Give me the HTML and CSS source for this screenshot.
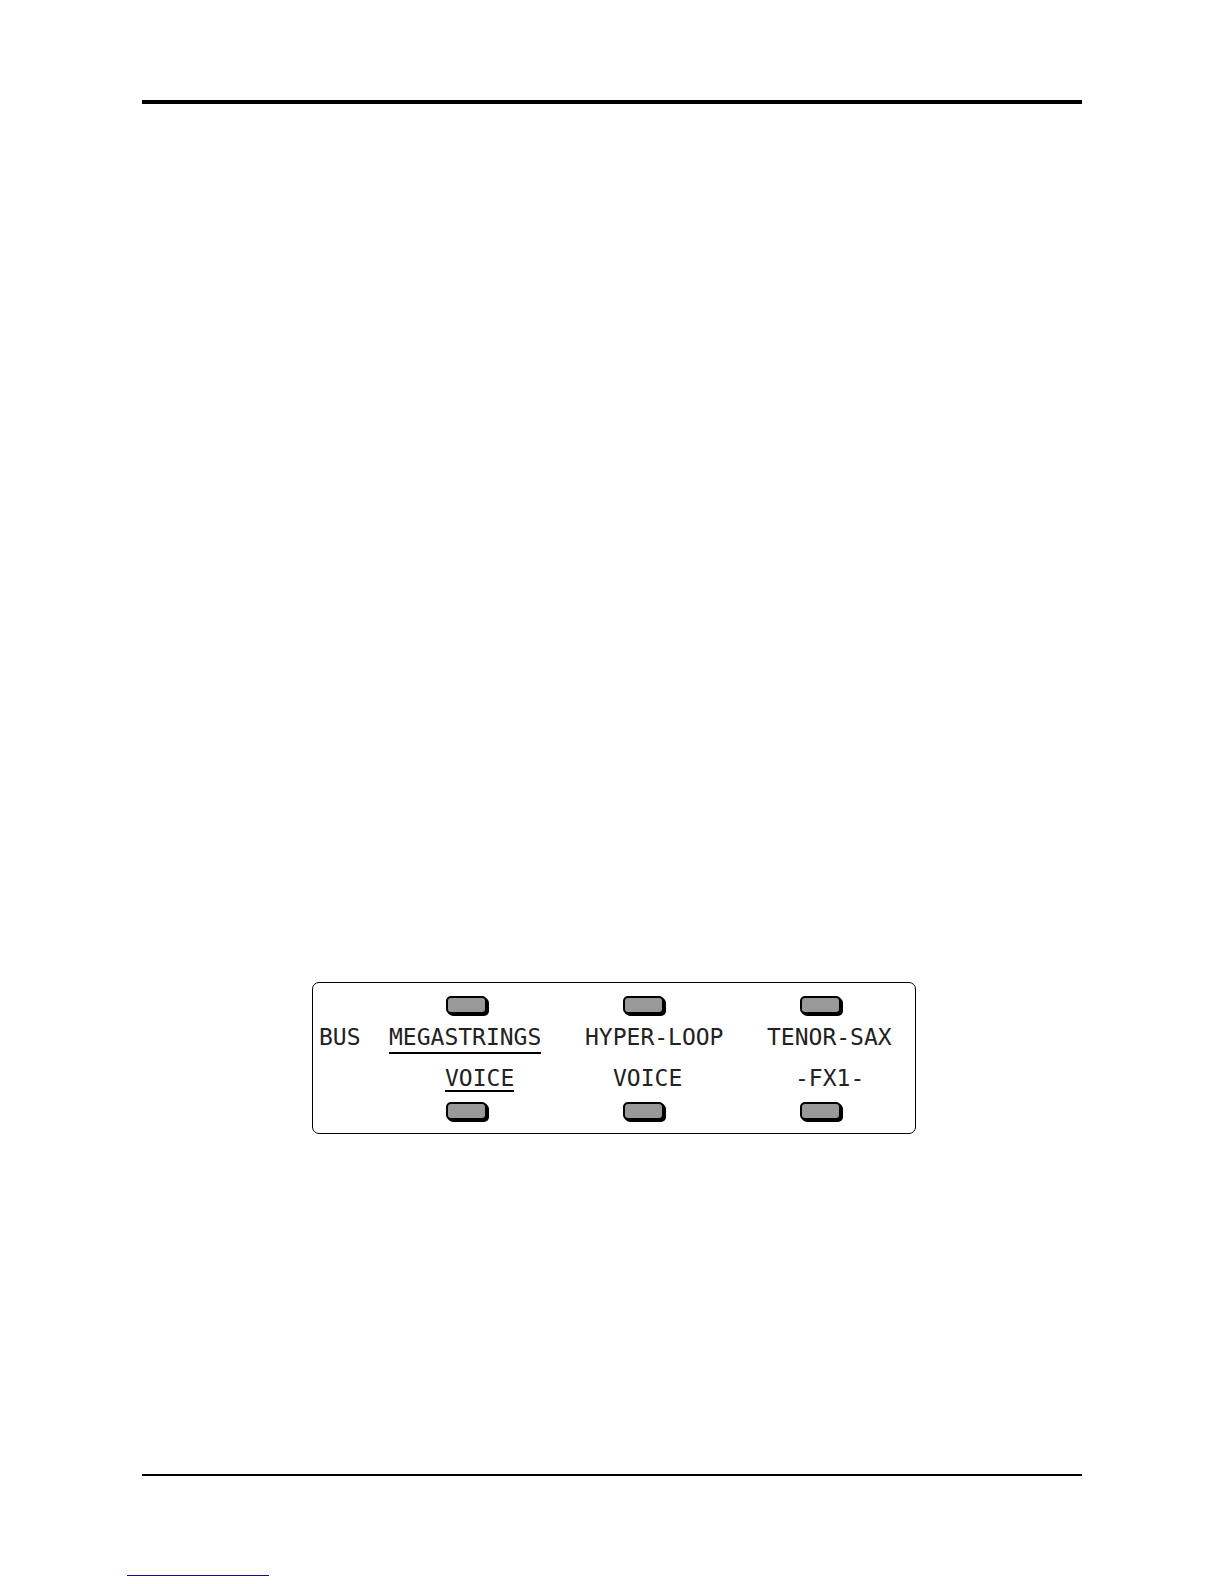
FILE: index.html
```html
<!DOCTYPE html>
<html lang="en">
<head>
<meta charset="utf-8">
<title>Bus effects display</title>
<link rel="stylesheet" href="styles.css">
</head>
<body>
<main class="page">
  <section class="display" aria-label="Bus display">
    <div class="keys">
      <button class="key" type="button" aria-label="Megastrings"></button>
      <button class="key" type="button" aria-label="Hyper-Loop"></button>
      <button class="key" type="button" aria-label="Tenor-Sax"></button>
    </div>
    <div class="line line-names">
      <span class="col-0">BUS</span>
      <span class="col-5 selected">MEGASTRINGS</span>
      <span class="col-19">HYPER-LOOP</span>
      <span class="col-32">TENOR-SAX</span>
    </div>
    <div class="line line-buses">
      <span class="col-9 selected">VOICE</span>
      <span class="col-21">VOICE</span>
      <span class="col-34">-FX1-</span>
    </div>
    <div class="keys">
      <button class="key" type="button" aria-label="Megastrings bus"></button>
      <button class="key" type="button" aria-label="Hyper-Loop bus"></button>
      <button class="key" type="button" aria-label="Tenor-Sax bus"></button>
    </div>
  </section>
</main>
<footer class="footer"><div class="footer-rule"></div></footer>
</body>
</html>
```
FILE: styles.css
```css
* {
  box-sizing: border-box;
}

body {
  margin: 0;
  background: #fff;
  color: #222;
}

.page {
  max-width: 940px;
  margin: 100px auto 0;
  padding: 878px 166px 340px 170px;
  border-top: 4px solid #000;
  border-bottom: 2px solid #000;
}

.display {
  padding: 13px 6px 11px;
  border: 1px solid #000;
  border-radius: 7px;
  font: 23px/22px "DejaVu Sans Mono", monospace;
}

.keys {
  display: flex;
  justify-content: space-between;
  padding: 0 68px 2px 127px;
}

.key {
  width: 41px;
  height: 18px;
  padding: 0;
  border: 2px solid #000;
  border-radius: 5px;
  background: #999;
  box-shadow: 1px 1px #000, 2px 2px #000;
}

/* The display is a grid of 14px character cells. */
.line {
  display: grid;
  grid-template-columns: repeat(41, 14px);
  align-items: start;
  justify-items: start;
  white-space: nowrap;
}

.line-names {
  padding-top: 10px;
  height: 51px;
}

.line-buses {
  height: 35px;
}

.line span {
  grid-row: 1;
}

.selected {
  padding-bottom: 1px;
  border-bottom: 2px solid #000;
}

.line-names .selected {
  padding-bottom: 4px;
}

.col-0 { grid-column: 1 / span 3; }
.col-5 { grid-column: 6 / span 11; }
.col-9 { grid-column: 10 / span 5; }
.col-19 { grid-column: 20 / span 10; }
.col-21 { grid-column: 22 / span 5; }
.col-32 { grid-column: 33 / span 9; }
.col-34 { grid-column: 35 / span 5; }

.footer {
  padding: 99px 127px 8px;
}

.footer-rule {
  max-width: 142px;
  border-top: 1px solid #10108c;
}
```
